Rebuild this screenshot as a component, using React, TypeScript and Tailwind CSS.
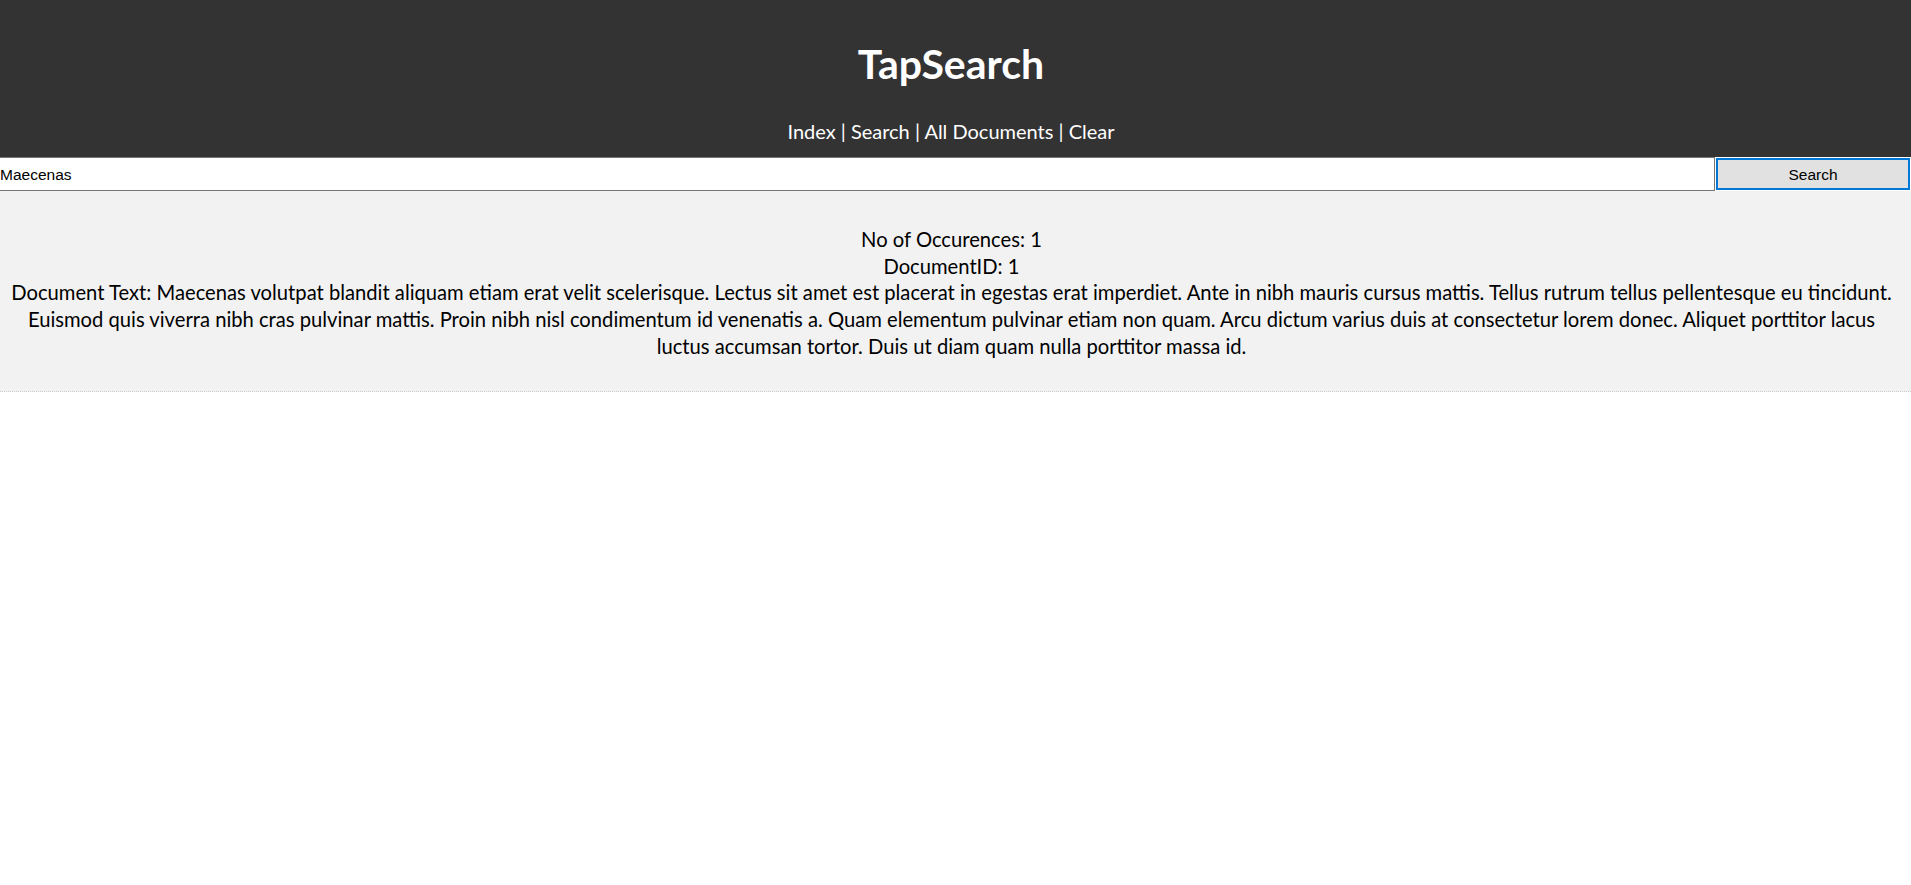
import { useState } from "react";

const docText =
  "Document Text: Maecenas volutpat blandit aliquam etiam erat velit scelerisque. Lectus sit amet est placerat in egestas erat imperdiet. Ante in nibh mauris cursus mattis. Tellus rutrum tellus pellentesque eu tincidunt. Euismod quis viverra nibh cras pulvinar mattis. Proin nibh nisl condimentum id venenatis a. Quam elementum pulvinar etiam non quam. Arcu dictum varius duis at consectetur lorem donec. Aliquet porttitor lacus luctus accumsan tortor. Duis ut diam quam nulla porttitor massa id.";

const navItems = ["Index", "Search", "All Documents", "Clear"];

export default function App() {
  const [query, setQuery] = useState("Maecenas");

  return (
    <div className="min-h-screen bg-white font-['Lato',sans-serif] text-black">
      <header className="flex h-[157px] flex-col items-center bg-[#333333] pr-[9px] text-white">
        <h1 className="mt-[40px] text-[41px] font-bold leading-[48px]">TapSearch</h1>
        <nav className="mt-[30px] text-[20px] leading-[27px]">
          {navItems.map((item, i) => (
            <span key={item}>
              {i > 0 && " | "}
              <a href="#" className="text-white">
                {item}
              </a>
            </span>
          ))}
        </nav>
      </header>

      <form className="flex h-[34px]" onSubmit={(e) => e.preventDefault()}>
        <input
          value={query}
          onChange={(e) => setQuery(e.target.value)}
          className="h-[34px] flex-1 border-y border-r border-[#767676] bg-white pl-0 pt-[2px] font-['Liberation_Sans',sans-serif] text-[15.5px] text-black outline-none"
        />
        <button
          type="submit"
          className="mx-[1px] mt-[1px] h-[32px] w-[194px] border-2 border-[#0078d7] bg-[#e1e1e1] pt-[2px] font-['Liberation_Sans',sans-serif] text-[15.5px] text-black"
        >
          Search
        </button>
      </form>

      <section className="border-b border-dotted border-[#cccccc] bg-[#f2f2f2] pb-[31px] pl-[2px] pr-[10px] pt-[35px] text-center text-[20.2px] leading-[26.7px]">
        <p>No of Occurences: 1</p>
        <p>DocumentID: 1</p>
        <p>{docText}</p>
      </section>
    </div>
  );
}
